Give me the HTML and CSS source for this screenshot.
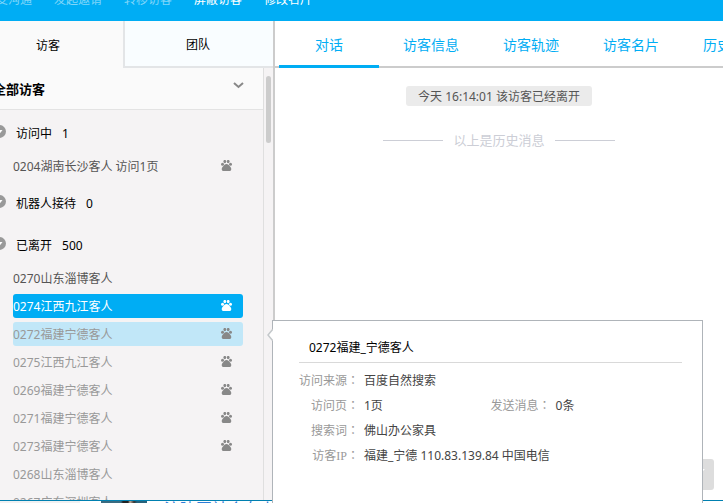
FILE: index.html
```html
<!DOCTYPE html>
<html lang="zh-CN">
<head>
<meta charset="utf-8">
<title>访客</title>
<link rel="stylesheet" href="styles.css">
</head>
<body>
<svg class="defs" aria-hidden="true">
  <symbol id="paw" viewBox="0 0 11 11">
    <ellipse cx="1.5" cy="4.2" rx="1.5" ry="1.5"/>
    <ellipse cx="3.8" cy="1.6" rx="1.4" ry="1.7"/>
    <ellipse cx="7.2" cy="1.6" rx="1.4" ry="1.7"/>
    <ellipse cx="9.5" cy="4.2" rx="1.5" ry="1.5"/>
    <path d="M5.500 3.900C7.200 3.900 8 5.200 8.800 6.300C9.900 7.400 10.500 8.600 10.200 9.700C9.900 11 8.500 11 7.500 11H3.500C2.500 11 1.100 11 .8 9.700C.5 8.600 1.100 7.400 2.200 6.300C3 5.200 3.800 3.900 5.500 3.900Z"/>
  </symbol>
  <symbol id="toggle" viewBox="0 0 13 13">
    <circle cx="6.500" cy="6.500" r="6.500" fill="#999"/>
    <path d="M3.500 5H9.500L6.500 9Z" fill="#fff"/>
  </symbol>
</svg>
<header class="toolbar">
  <nav class="toolbar-nav">
    <button class="tool" type="button" disabled>接受沟通</button>
    <button class="tool" type="button" disabled>发起邀请</button>
    <button class="tool" type="button" disabled>转移访客</button>
    <button class="tool" type="button">屏蔽访客</button>
    <button class="tool" type="button">修改名片</button>
  </nav>
</header>
<div class="workspace">
  <aside class="sidebar">
    <div class="side-tabs">
      <button class="side-tab current" type="button">访客</button>
      <button class="side-tab" type="button">团队</button>
    </div>
    <div class="side-body">
      <div class="visitors">
        <button class="filter" type="button"><span>全部访客</span>
          <svg class="caret" viewBox="0 0 11 7"><path d="M1 1L5.500 5L10 1" fill="none" stroke="#888" stroke-width="2"/></svg>
        </button>
        <div class="groups">
          <button class="group" type="button"><svg class="toggle"><use href="#toggle"/></svg><span>访问中</span><span>1</span></button>
          <ul class="list">
            <li><button class="visitor online" type="button"><span>0204湖南长沙客人 访问1页</span><svg class="paw"><use href="#paw"/></svg></button></li>
          </ul>
          <button class="group" type="button"><svg class="toggle"><use href="#toggle"/></svg><span>机器人接待</span><span>0</span></button>
          <button class="group" type="button"><svg class="toggle"><use href="#toggle"/></svg><span>已离开</span><span>500</span></button>
          <ul class="list">
            <li><button class="visitor online" type="button"><span>0270山东淄博客人</span></button></li>
            <li><button class="visitor selected" type="button"><span>0274江西九江客人</span><svg class="paw"><use href="#paw"/></svg></button></li>
            <li><button class="visitor hovered" type="button"><span>0272福建宁德客人</span><svg class="paw"><use href="#paw"/></svg></button></li>
            <li><button class="visitor" type="button"><span>0275江西九江客人</span><svg class="paw"><use href="#paw"/></svg></button></li>
            <li><button class="visitor" type="button"><span>0269福建宁德客人</span><svg class="paw"><use href="#paw"/></svg></button></li>
            <li><button class="visitor" type="button"><span>0271福建宁德客人</span><svg class="paw"><use href="#paw"/></svg></button></li>
            <li><button class="visitor" type="button"><span>0273福建宁德客人</span><svg class="paw"><use href="#paw"/></svg></button></li>
            <li><button class="visitor" type="button"><span>0268山东淄博客人</span></button></li>
            <li><button class="visitor" type="button"><span>0267广东深圳客人</span></button></li>
          </ul>
        </div>
      </div>
      <div class="scrollbar"><div class="thumb"></div></div>
    </div>
  </aside>
  <main class="main">
    <nav class="tabs">
      <a class="tab active" href="#">对话</a>
      <a class="tab" href="#">访客信息</a>
      <a class="tab" href="#">访客轨迹</a>
      <a class="tab" href="#">访客名片</a>
      <a class="tab" href="#">历史消息</a>
    </nav>
    <section class="chat">
      <p class="notice">今天 16:14:01 该访客已经离开</p>
      <p class="history">以上是历史消息</p>
    </section>
    <button class="more" type="button" aria-label="更多"><svg viewBox="0 0 10 6"><path d="M0 0H10L5 6Z" fill="#fff"/></svg></button>
  </main>
</div>
<footer class="below">
  <div class="thumbnail"></div>
  <span class="below-text">注建国社会有上</span>
</footer>
<section class="card">
  <svg class="pointer" viewBox="0 0 6 12"><path d="M6 0L1 6L6 12" fill="#fff" stroke="#c4c8cb" stroke-width="1.500"/></svg>
  <h2 class="card-title">0272福建_宁德客人</h2>
  <dl class="facts">
    <div class="fact wide"><dt>访问来源<span class="colon" lang="zh-TW">：</span></dt><dd>百度自然搜索</dd></div>
    <div class="fact"><dt>访问页<span class="colon" lang="zh-TW">：</span></dt><dd>1页</dd></div>
    <div class="fact"><dt>发送消息<span class="colon" lang="zh-TW">：</span></dt><dd>0条</dd></div>
    <div class="fact wide"><dt>搜索词<span class="colon" lang="zh-TW">：</span></dt><dd>佛山办公家具</dd></div>
    <div class="fact wide"><dt>访客<span class="serif">IP</span><span class="colon" lang="zh-TW">：</span></dt><dd>福建_宁德 110.83.139.84 中国电信</dd></div>
  </dl>
</section>
</body>
</html>
```
FILE: styles.css
```css
* { box-sizing: border-box; }

body {
  display: flex;
  flex-direction: column;
  height: 100vh;
  margin: 0;
  overflow: hidden;
  position: relative;
  background: #fff;
  color: #000;
  font: 12px/20px "Noto Sans", "Noto Sans CJK SC", sans-serif;
}

button {
  margin: 0;
  padding: 0;
  border: 0;
  background: none;
  color: inherit;
  font: inherit;
  text-align: left;
}

p, ul, dl, dd, h2 { margin: 0; padding: 0; }
ul { list-style: none; }
a { text-decoration: none; }
.defs { position: absolute; width: 0; height: 0; }

.toolbar {
  flex: none;
  height: 21px;
  overflow: hidden;
  background: #00adf4;
}

.toolbar-nav {
  display: flex;
  gap: 22px;
  margin: -10px 0 0 -16px;
}

.tool { flex: none; color: #fff; }
.tool:disabled { color: #80d6f9; }

.workspace {
  display: flex;
  flex: 1;
  min-height: 0;
}

.sidebar {
  display: flex;
  flex: none;
  flex-direction: column;
  width: 275px;
  border-right: 2px solid #ccc;
  background: #f5f3f4;
}

.side-tabs { display: flex; flex: none; height: 47px; }

.side-tab {
  flex: 1;
  padding: 2px 2px 0 0;
  border: solid #e3e5e7;
  border-width: 0 0 2px 2px;
  background: #f9fdff;
  text-align: center;
}

.side-tab.current {
  flex: 0 0 123px;
  padding-right: 27px;
  border: 0;
  background: #fafafa;
}

.side-body { display: flex; flex: 1; min-height: 0; }

.visitors {
  flex: 1;
  overflow: hidden;
  border-right: 1px solid #dfdfdf;
}

.filter {
  display: flex;
  align-items: center;
  justify-content: space-between;
  width: 100%;
  height: 42px;
  padding-right: 19px;
  border-bottom: 1px solid #e3e3e3;
  background: #fafafa;
  font-size: 13px;
  font-weight: bold;
}

.filter span { margin-left: -7px; }
.caret { width: 11px; height: 7px; margin-bottom: 6px; }
.groups { padding-top: 2px; }

.group {
  display: flex;
  align-items: center;
  gap: 10px;
  width: 100%;
  height: 42px;
}

.group span, .visitor span { padding-top: 2px; }
.toggle { width: 13px; height: 13px; margin: 0 0 3px -7px; }
.list { margin: 0 20px 0 13px; }

.visitor {
  display: flex;
  align-items: center;
  justify-content: space-between;
  width: 100%;
  height: 24px;
  margin-bottom: 4px;
  padding-right: 11px;
  border-radius: 3px;
  color: #999;
}

.visitor.online { color: #555; }
.visitor.selected { background: #00adf4; color: #fff; }
.visitor.hovered { background: #c1e7f8; }
.paw { width: 11px; height: 11px; margin-bottom: 1px; fill: #888; }
.selected .paw { fill: #fff; }

.scrollbar { flex: none; width: 9px; padding: 8px 2px; }
.thumb { height: 67px; border-radius: 3px; background: #ccc; }

.main {
  flex: 1;
  min-width: 0;
  position: relative;
}

.tabs {
  display: flex;
  height: 47px;
  padding-left: 4px;
  overflow: hidden;
  box-shadow: inset 0 -2px #ccc;
}

.tab {
  flex: 0 0 100px;
  border-bottom: 3px solid transparent;
  color: #00adf4;
  font-size: 14px;
  line-height: 48px;
  text-align: center;
}

.tab.active { margin-right: 2px; border-color: #00adf4; }

.chat {
  display: flex;
  flex-direction: column;
  align-items: center;
  gap: 24px;
  padding-top: 18px;
}

.notice {
  height: 20px;
  padding: 0 12px;
  border-radius: 3px;
  background: #ebebeb;
  color: #555;
  line-height: 22px;
}

.history {
  display: flex;
  align-items: center;
  gap: 10px;
  height: 20px;
  color: #ccced6;
  font-size: 13px;
}

.history::before,
.history::after {
  width: 60px;
  height: 1px;
  background: #ccced6;
  content: "";
}

.more {
  position: absolute;
  right: 9px;
  bottom: 10px;
  width: 31px;
  height: 31px;
  border-radius: 3px;
  background: #ddd;
  text-align: center;
}

.more svg { display: block; width: 14px; height: 7px; margin: 0 auto 4px; }

.below {
  display: flex;
  flex: none;
  gap: 17px;
  height: 3px;
  padding-left: 101px;
  overflow: hidden;
  border-top: 1px solid #0080b0;
  background: linear-gradient(to right, #f0f1f2 80px, #fff 80px);
}

.thumbnail {
  width: 46px;
  background: linear-gradient(to right, #3a6b80 20px, #222 22px, #222 27px, #c0aa98 29px, #333 33px, #28627a 36px);
}

.below-text { color: #2f7ed8; font-size: 16px; line-height: 16px; }

.card {
  position: absolute;
  top: 320px;
  right: 20px;
  bottom: 0;
  left: 272px;
  padding: 12px 20px 0 26px;
  border: solid #afb4b9;
  border-width: 1px 1px 0;
  background: #fff;
}

.pointer {
  position: absolute;
  top: 8px;
  left: -6px;
  width: 6px;
  height: 12px;
}

.card-title {
  height: 30px;
  margin-bottom: 5px;
  padding: 5px 10px 0;
  border-bottom: 1px solid #d9d9d9;
  font-size: 12px;
  font-weight: normal;
}

.facts { display: grid; grid-template-columns: 1fr 1fr; grid-auto-rows: 25px; }
.fact { display: flex; gap: 5px; line-height: 25px; white-space: nowrap; }
.fact.wide { grid-column: span 2; }
.fact dt { flex: 0 0 60px; color: #999; text-align: right; }
.fact dd { color: #444; }
.colon { font-family: "Noto Sans CJK TC", sans-serif; line-height: 1; }
.serif { font-family: "Liberation Serif", serif; line-height: 1; }
```
